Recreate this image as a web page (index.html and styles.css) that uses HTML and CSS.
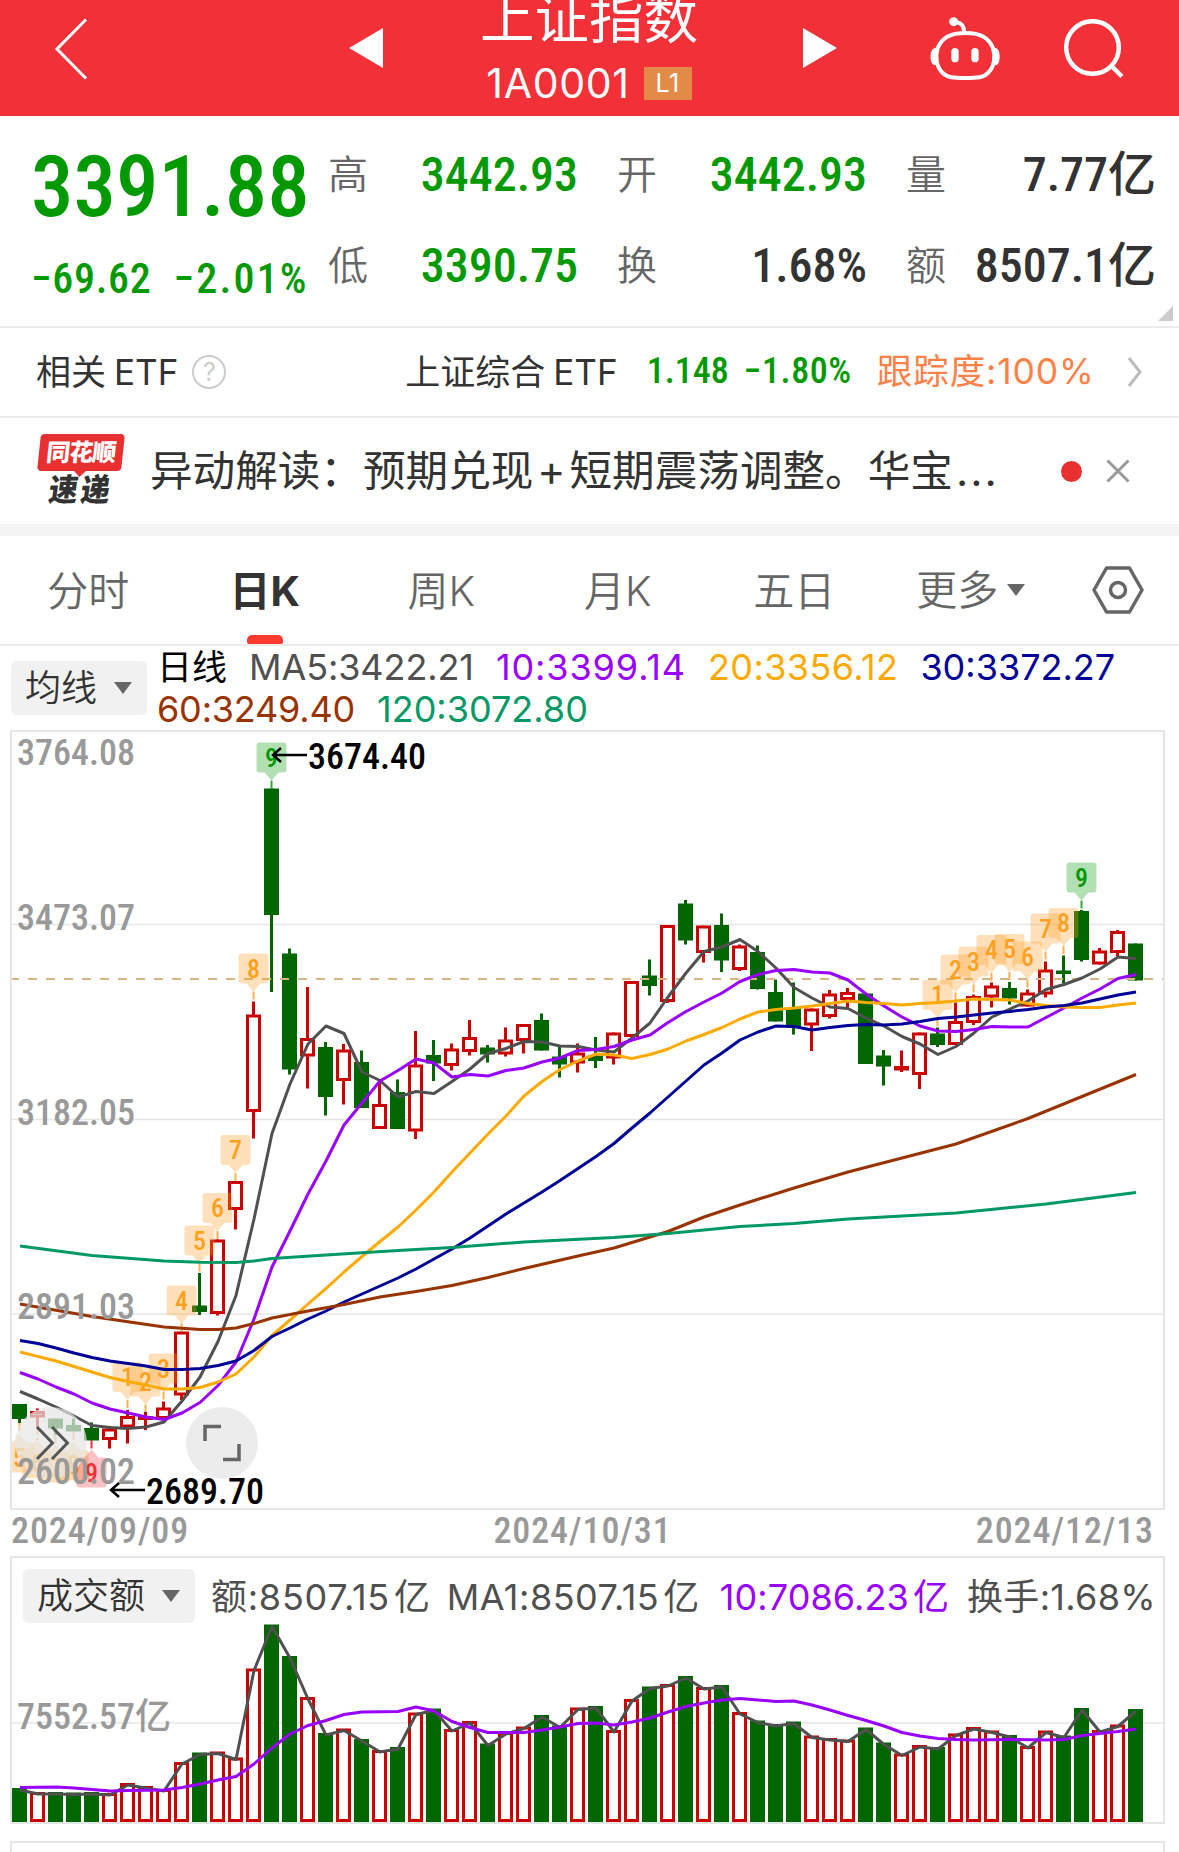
FILE: index.html
```
<!DOCTYPE html>
<html lang="zh-CN">
<head>
  <meta charset="UTF-8">
  <meta name="viewport" content="width=device-width, initial-scale=1.0">
  <title>上证指数 1A0001</title>
  <link rel="stylesheet" href="styles.css">
</head>
<body>
  <header>
    <svg class="back" width="34" height="62" viewBox="0 0 34 62"><path d="M32 1.500L3 31L32 60.500" fill="none" stroke="#fff" stroke-width="3"/></svg>
    <svg class="prev" width="34" height="40" viewBox="0 0 34 40"><path d="M34 0V40L0 20Z" fill="#fff"/></svg>
    <div class="title">
      <div class="name">上证指数</div>
      <div class="code">1A0001 <span class="level">L1</span></div>
    </div>
    <svg class="next" width="34" height="40" viewBox="0 0 34 40"><path d="M0 0V40L34 20Z" fill="#fff"/></svg>
    <svg class="robot" width="70" height="66" viewBox="93 47 210 198">
      <path d="M199 98C152 98 129 113 116 143C108 170 112 199 130 217C143 232 165 233 199 233S255 232 268 217C286 199 290 170 282 143C269 113 246 98 199 98Z" fill="none" stroke="#fff" stroke-width="12"/>
      <path d="M108 143C90 145 90 193 108 195L115 192C109 176 109 160 114 143ZM290 143C306 145 306 193 290 195L283 192C289 176 289 160 284 143Z" fill="#fff"/>
      <path d="M195 97C196 78 189 68 172 65" fill="none" stroke="#fff" stroke-width="12"/>
      <circle cx="164" cy="64" r="13.500" fill="#fff"/>
      <rect x="157" y="143" width="22" height="43" rx="11" fill="#fff"/>
      <rect x="217" y="143" width="22" height="43" rx="11" fill="#fff"/>
    </svg>
    <svg class="search" width="60" height="60" viewBox="0 0 60 60"><circle cx="28.500" cy="28.500" r="26.300" fill="none" stroke="#fff" stroke-width="4.500"/><path d="M48 47.500L58 57.500" stroke="#fff" stroke-width="4.500"/></svg>
  </header>

  <section class="quote">
    <div class="price down">
      <div class="last">3391.88</div>
      <div class="change"><span>−69.62</span><span class="percent">−2.01%</span></div>
    </div>
    <div class="stats">
      <div class="stat"><label>高</label><b class="down">3442.93</b></div>
      <div class="stat"><label>开</label><b class="down">3442.93</b></div>
      <div class="stat"><label>量</label><b>7.77亿</b></div>
      <div class="stat"><label>低</label><b class="down">3390.75</b></div>
      <div class="stat"><label>换</label><b>1.68%</b></div>
      <div class="stat"><label>额</label><b>8507.1亿</b></div>
    </div>
    <i class="corner"></i>
  </section>

  <section class="etf">
    <span>相关<em>ETF</em></span>
    <span class="help">?</span>
    <span class="etf-name">上证综合<em>ETF</em></span>
    <span class="din down">1.148</span>
    <span class="din down rate">−1.80%</span>
    <span class="track">跟踪度:100%</span>
    <svg class="more" width="16" height="32" viewBox="0 0 16 32"><path d="M2 2L13 16L2 30" fill="none" stroke="#bbb" stroke-width="3"/></svg>
  </section>

  <section class="notice">
    <div class="badge">
      <div class="badge-top">同花顺</div>
      <div class="badge-bottom">速递</div>
    </div>
    <p>异动解读：预期兑现<span class="plus">+</span>短期震荡调整。华宝<span class="dots">...</span></p>
    <i class="dot"></i>
    <svg class="close" width="24" height="24" viewBox="0 0 24 24"><path d="M1.500 1.500L22.500 22.500M22.500 1.500L1.500 22.500" stroke="#999" stroke-width="3"/></svg>
  </section>

  <nav>
    <a class="tab">分时</a>
    <a class="tab active">日K</a>
    <a class="tab">周K</a>
    <a class="tab">月K</a>
    <a class="tab">五日</a>
    <a class="tab last-tab">更多<i class="arrow"></i></a>
    <svg class="gear" width="52" height="48" viewBox="0 0 52 48"><path d="M14.500 2H37.500L50 24L37.500 46H14.500L2 24Z" fill="none" stroke="#666" stroke-width="3.500" stroke-linejoin="round"/><circle cx="26" cy="24" r="7.500" fill="none" stroke="#666" stroke-width="3.500"/></svg>
  </nav>

  <section class="legend">
    <div class="select">均线<i class="arrow"></i></div>
    <div class="ma">
      <span class="day">日线</span>
      <span class="ma5">MA5:3422.21</span>
      <span class="ma10">10:3399.14</span>
      <span class="ma20">20:3356.12</span>
      <span class="ma30">30:3372.27</span>
      <span class="ma60">60:3249.40</span>
      <span class="ma120">120:3072.80</span>
    </div>
  </section>

  <div class="panel">
    <svg id="kline" width="1151" height="776" viewBox="12 732 1151 776"></svg>
  </div>
  <div class="dates"><span>2024/09/09</span><span>2024/10/31</span><span>2024/12/13</span></div>

  <div class="panel volume">
    <div class="volume-bar">
      <div class="select">成交额<i class="arrow"></i></div>
      <span class="v1">额:8507.15<u>亿</u></span>
      <span class="v2">MA1:8507.15<u>亿</u></span>
      <span class="v3">10:7086.23<u>亿</u></span>
      <span class="v4">换手:1.68%</span>
    </div>
    <svg id="volume" width="1151" height="200" viewBox="12 1622 1151 200"></svg>
  </div>
  <div class="panel next-panel"></div>
  <script src="script.js"></script>
</body>
</html>
```
FILE: styles.css
```
body {
  margin: 0;
  width: 1179px;
  background: #fff;
  color: #333;
  font-family: Inter, "Noto Sans CJK SC", sans-serif;
  line-height: 1.2;
  display: flex;
  flex-direction: column;
}

header, section, nav, .panel, .dates {
  box-sizing: border-box;
  flex-shrink: 0;
}

i, em, u {
  font-style: normal;
  text-decoration: none;
}

.down {
  color: #009900 !important;
}

header {
  height: 116px;
  background: #f23038;
  color: #fff;
  display: flex;
  align-items: flex-start;
  overflow: hidden;
}

header svg {
  flex-shrink: 0;
}

.back {
  margin: 18px 0 0 54px;
}

.prev {
  margin: 28px 0 0 261px;
}

.title {
  width: 420px;
  padding-right: 8px;
  box-sizing: border-box;
  text-align: center;
}

.name {
  font-size: 54.500px;
  line-height: 60px;
  margin-top: -12px;
  font-weight: 370;
}

.code {
  font-size: 41px;
  line-height: 42px;
  margin-top: 14px;
  display: flex;
  justify-content: center;
  align-items: center;
  gap: 14px;
  font-weight: 370;
  letter-spacing: .7px;
}

.level {
  background: #e28b48;
  width: 48px;
  height: 33px;
  line-height: 33px;
  font-size: 25px;
}

.next {
  margin-top: 28px;
}

.robot {
  margin: 16px 0 0 93px;
}

.search {
  margin: 19px 0 0 64px;
}

.quote {
  height: 212px;
  position: relative;
  display: flex;
  border-bottom: 2px solid #ececec;
}

.price, .stat b, .din, .dates {
  font-family: Roboto, "Noto Sans CJK SC", sans-serif;
  font-stretch: 75%;
  font-weight: 500;
}

.price {
  width: 297px;
  padding: 19px 0 0 31px;
  box-sizing: border-box;
}

.last {
  font-size: 85px;
  line-height: 104px;
}

.change {
  font-size: 42px;
  line-height: 50px;
  margin-top: 15px;
  display: flex;
  gap: 22px;
  white-space: nowrap;
  font-weight: 480;
  letter-spacing: .7px;
}

.percent {
  letter-spacing: 2.200px;
}

.stats {
  flex-grow: 1;
  display: grid;
  grid-template-columns: 250px 250px 250px;
  column-gap: 39px;
  grid-auto-rows: 91px;
  padding: 13px 0 0 31px;
}

.stat {
  display: flex;
  justify-content: space-between;
  align-items: center;
}

.stat label {
  font-size: 40px;
  color: #666;
  font-weight: 350;
}

.stat b {
  font-size: 48px;
}

.corner {
  position: absolute;
  right: 6px;
  bottom: 5px;
  border-left: 15px solid transparent;
  border-bottom: 15px solid #ccc;
}

.etf {
  height: 90px;
  display: flex;
  align-items: center;
  border-bottom: 2px solid #ececec;
  padding-left: 36px;
  font-size: 35px;
  font-weight: 380;
  white-space: nowrap;
}

.etf em {
  margin-left: 8px;
}

.help {
  width: 30px;
  height: 30px;
  border: 2px solid #ccc;
  border-radius: 50%;
  margin-left: 14px;
  font-size: 25px;
  line-height: 30px;
  text-align: center;
  color: #ccc;
}

.etf-name {
  margin-left: 179px;
}

.etf .din {
  font-size: 36px;
  margin-left: 29px;
}

.etf .rate {
  margin-left: 15px;
  letter-spacing: .6px;
}

.track {
  color: #ff8147;
  margin-left: 25px;
  font-size: 35.500px;
  letter-spacing: .9px;
}

.more {
  margin-left: 32px;
}

.notice {
  height: 118px;
  border-bottom: 12px solid #f4f4f4;
  display: flex;
  align-items: center;
  padding-left: 39px;
}

.badge {
  width: 84px;
  text-align: center;
  font-weight: 900;
  margin-right: 27px;
}

.badge-top {
  background: #e93030;
  color: #fff;
  border-radius: 4px;
  transform: skewX(-6deg);
  height: 37px;
  line-height: 37px;
  font-size: 24px;
  letter-spacing: -1px;
}

.badge-top::after {
  content: "";
  position: absolute;
  left: 37px;
  top: 37px;
  border: 6px solid transparent;
  border-top-color: #e93030;
  border-bottom: 0;
}

.badge-bottom {
  transform: skewX(-8deg) scaleY(1.08);
  color: #333;
  font-size: 29px;
  line-height: 38px;
  letter-spacing: 3px;
}

.notice p {
  width: 860px;
  margin: 0;
  font-size: 42.600px;
  font-weight: 370;
  white-space: nowrap;
}

.plus {
  margin: 0 4px;
}

.dots {
  letter-spacing: 2px;
  margin-left: 3px;
}

.dot {
  width: 21px;
  height: 21px;
  border-radius: 50%;
  background: #e93030;
  margin-left: 51px;
}

.close {
  margin-left: 24px;
}

nav {
  height: 110px;
  display: flex;
  align-items: center;
  border-bottom: 2px solid #ececec;
  font-size: 41px;
  font-weight: 350;
  color: #666;
}

.tab {
  width: 176.500px;
  height: 108px;
  line-height: 111px;
  text-align: center;
  position: relative;
}

.tab.active {
  color: #333;
  font-weight: 700;
}

.tab.active::after {
  content: "";
  position: absolute;
  left: 70px;
  bottom: 0;
  width: 36px;
  height: 9px;
  border-radius: 5px 5px 2px 2px;
  background: #ff3b30;
}

.arrow {
  display: inline-block;
  border: 9px solid transparent;
  border-top: 12px solid #666;
  border-bottom: 0;
}

.last-tab {
  display: flex;
  justify-content: center;
  align-items: center;
  gap: 9px;
}

.gear {
  margin-left: 33px;
}

.legend {
  height: 84px;
  display: flex;
  padding-left: 11px;
}

.select {
  height: 54px;
  border-radius: 6px;
  background: #f1f1f1;
  font-size: 36px;
  line-height: 55px;
  font-weight: 350;
  box-sizing: border-box;
  padding: 0 15px 0 14px;
  display: flex;
  align-items: center;
  justify-content: space-between;
}

.legend .select {
  width: 136px;
  margin-top: 15px;
}

.ma {
  width: 1010px;
  margin-left: 10px;
  display: flex;
  flex-wrap: wrap;
  column-gap: 22px;
  font-size: 36px;
  line-height: 42px;
  height: 84px;
  font-weight: 380;
}

.day { color: #000; font-size: 35px; }
.ma5 { color: #505050; letter-spacing: -.1px; }
.ma10 { color: #9900ff; letter-spacing: .900px; }
.ma20 { color: #ffaa00; letter-spacing: .4px; }
.ma30 { color: #000099; }
.ma60 { color: #993300; letter-spacing: -.2px; }
.ma120 { color: #009966; }

.panel {
  width: 1155px;
  margin-left: 10px;
  border: 2px solid #e6e6e6;
  height: 780px;
}

.panel svg {
  display: block;
}

.dates {
  height: 46px;
  padding: 0 25px 0 11px;
  display: flex;
  justify-content: space-between;
  color: #999;
  font-size: 36px;
  line-height: 42px;
  letter-spacing: .9px;
}

.volume {
  height: 268px;
}

.volume-bar {
  height: 64px;
  padding: 11px 0 0 11px;
  box-sizing: border-box;
  display: flex;
  align-items: flex-start;
  font-size: 36px;
  line-height: 56px;
  font-weight: 380;
  color: #505050;
  white-space: nowrap;
}

.volume .select {
  width: 172px;
  color: #333;
  flex-shrink: 0;
  margin-right: 16px;
}

.volume-bar u {
  margin-left: 4px;
}

.v1 { letter-spacing: .750px; }
.v2 { letter-spacing: .5px; margin-left: 16px; }
.v3 { letter-spacing: .1px; margin-left: 20px; color: #9900ff; }
.v4 { letter-spacing: .3px; margin-left: 18px; }

.next-panel {
  margin-top: 17px;
  height: 11px;
  border-bottom: 0;
}

/* chart */
svg text {
  font-family: Roboto, "Noto Sans CJK SC", sans-serif;
  font-stretch: 75%;
  font-weight: 500;
}

.grid { stroke: #e6e6e6; stroke-width: 1.500; }
.axis { fill: #999; font-size: 36px; }
.extreme { fill: #000; font-size: 36px; }
.line { fill: none; stroke-width: 3; stroke-linejoin: round; }
.green { fill: #006600; stroke: #006600; stroke-width: 3; }
.red { fill: #fff; stroke: #cc0000; stroke-width: 3; }
.flag { fill: #ffa028; fill-opacity: .32; }
.flag-text { fill: #ffa020; font-size: 26px; text-anchor: middle; }
.stem { stroke: #ffb050; stroke-width: 2; stroke-dasharray: 8 3; }
.sell .flag { fill: #009900; fill-opacity: .3; }
.sell .flag-text { fill: #009900; }
.sell .stem { stroke: #33aa33; }
.buy .flag { fill: #f03038; fill-opacity: .3; }
.buy .flag-text { fill: #f03038; }
.buy .stem { stroke: #f03038; }
```
FILE: script.js
```
const STEP = 18;
const LEFT = 19.5;
const xAt = (i) => LEFT + i * STEP;

// [direction, body top, body bottom, high, low]
const candles = [
  ['g', 1404, 1419, 1404, 1423], ['r', 1411, 1417.5, 1408.5, 1427], ['g', 1418.5, 1428.5, 1418.5, 1435],
  ['g', 1425, 1431.5, 1418.5, 1431.5], ['g', 1428, 1440.5, 1422.5, 1440.5], ['r', 1428.5, 1440, 1426, 1448.5],
  ['r', 1416, 1427.5, 1410, 1443.5], ['r', 1416, 1420, 1412, 1430], ['r', 1407.5, 1419, 1401.5, 1419],
  ['r', 1331.5, 1395.5, 1331.5, 1400], ['g', 1305.5, 1312, 1273, 1315], ['r', 1239.5, 1314, 1239.5, 1315.5],
  ['r', 1181, 1210, 1181, 1229.5], ['r', 1014.5, 1112, 1001.5, 1138.5], ['g', 788.5, 915, 788.5, 992],
  ['g', 953.5, 1069.5, 948.5, 1074.5], ['r', 1038, 1056.5, 987, 1088.5], ['g', 1047, 1097, 1042, 1115.5],
  ['r', 1049.5, 1081, 1044, 1104.5], ['g', 1062, 1108, 1050.5, 1108], ['r', 1104, 1129, 1080, 1129],
  ['g', 1092, 1129, 1079.5, 1129], ['r', 1064.5, 1131.5, 1031, 1139], ['g', 1055, 1063.5, 1040, 1081],
  ['r', 1048.5, 1066, 1043.5, 1070.5], ['r', 1037, 1052, 1020, 1055.5], ['g', 1047.5, 1054.5, 1045, 1062.5],
  ['r', 1039.5, 1054.5, 1027.5, 1056.5], ['r', 1024, 1041, 1024, 1053.5], ['g', 1020, 1050.5, 1013.5, 1050.5],
  ['g', 1056.5, 1064.5, 1046.5, 1077.5], ['r', 1052.5, 1063.5, 1043.5, 1072.5], ['g', 1055.5, 1061, 1037, 1068],
  ['r', 1032.5, 1058.5, 1032.5, 1064.5], ['r', 981, 1037, 981, 1037], ['g', 975.5, 986, 959.5, 995.5],
  ['r', 925, 1002, 925, 1003], ['g', 903.5, 940.5, 900, 944.5], ['r', 925.5, 953, 925.5, 962.5],
  ['g', 925, 960.5, 913.5, 972], ['r', 945.5, 970, 944.5, 971], ['g', 952, 989, 945.5, 989.5],
  ['g', 992, 1021.5, 979.5, 1021.5], ['g', 1008, 1027.5, 982.5, 1034.5], ['r', 1008.5, 1025.5, 1008.5, 1051],
  ['r', 993.5, 1017, 990, 1018.5], ['r', 992, 1000, 988, 1007.5], ['g', 993.5, 1064, 993.5, 1064],
  ['g', 1055.5, 1066.5, 1050, 1085.5], ['r', 1066, 1070.5, 1050.5, 1072], ['r', 1032.5, 1075, 1032.5, 1089],
  ['g', 1033.5, 1045, 1027.5, 1047], ['r', 1021, 1045, 1002.5, 1045], ['r', 996, 1023, 994.5, 1025],
  ['r', 985.5, 997.5, 982.5, 1007.5], ['g', 988, 998.5, 982, 1004.5], ['r', 992.5, 1006.5, 989.5, 1006.5],
  ['r', 969.5, 994.5, 961.5, 997.5], ['g', 970.5, 973.5, 955.5, 983.5], ['g', 911, 960, 910, 961.5],
  ['r', 950.5, 964.5, 948, 964.5], ['r', 931, 953, 930, 956], ['g', 943.5, 980.5, 943.5, 980.5]
];

// [index, y] pairs
const ma120 = [[0,1246],[4,1255.5],[8,1261],[10,1262.3],[12,1262.5],[13,1261],[14,1258.5],[17,1255],[21,1250.5],[24,1247.5],[28,1242],[33,1237.5],[36,1233.5],[40,1226.5],[43,1223.5],[46,1219],[52,1213],[57,1204],[62,1192.5]];
const ma60 = [[0,1304],[4,1316.5],[8,1327],[10,1329.5],[11,1329.5],[12,1328],[13,1323.5],[14,1318],[16,1311],[18,1304.5],[20,1297],[22,1291.5],[24,1285.5],[26,1277.5],[28,1268.5],[31,1256],[33,1248],[36,1231.5],[38,1217],[40,1205],[43,1188],[46,1172],[49,1158],[52,1144],[56,1118.5],[59,1096.5],[62,1074.5]];
const ma30 = [1340.5,1343.5,1348,1353,1357.5,1361,1363.5,1366,1369.5,1369.5,1368.5,1365.5,1361,1350.5,1336.5,1328,1319,1311,1302,1294,1286,1278,1269,1259,1249,1238,1226,1214,1203,1192,1180.5,1168.5,1156.5,1143.5,1128,1113,1097,1081,1065,1053,1040,1032,1026,1026.5,1030,1027.5,1025.5,1024.5,1025,1024,1021.5,1018.5,1017,1015,1013,1011.5,1009.5,1007,1005.5,1003,999,995,992];
const ma20 = [1352,1356.5,1361,1366.5,1372,1377.5,1381.5,1385,1389,1389,1387.5,1382,1374,1357,1335.5,1320,1304,1288.5,1272,1256.5,1241.5,1227,1210,1192,1172,1153,1134,1116,1096,1081.5,1069.5,1061,1054,1055,1058.5,1054.5,1049,1041,1034.5,1027.5,1019,1012,1009.5,1008,1006,1003.5,1001,1002.5,1003.5,1005,1003.5,1002.5,1001,999,999.5,1000,1003.5,1005.5,1007,1007.5,1007.5,1005,1003];
const ma10 = [1372.5,1379,1387,1394,1403,1409,1413,1417,1419.5,1413,1402.5,1385.5,1362,1319,1267,1231,1194,1161,1125,1103,1081,1070.5,1059,1063,1077,1074.5,1076,1070.5,1068,1062,1058,1050.5,1049.5,1046.5,1040,1035,1022.5,1011.5,1002,993,981.5,974.5,970.5,969.5,972,973,980,994,1006,1017,1026,1031,1031.5,1029.5,1026.5,1027,1027,1017.5,1008,998,989,978.5,974.5];
const ma5 = [1391.5,1399,1407,1416,1425.5,1427.5,1428.5,1427,1422,1401,1377,1341.5,1295.5,1219,1133.5,1084,1044,1026,1033.5,1072,1080.5,1097,1091.5,1093.5,1081.5,1069,1053.5,1048.5,1041.5,1042,1046,1046.5,1050,1052,1038,1023,997,973,951.5,947,939.5,951.5,968,987.5,998,1007,1008.5,1018,1026,1036.5,1044,1054.5,1046.5,1033,1017,1009,1001,989.5,984.5,978,969,957,958.5];

const volumes = [1788,1792,1792,1792.5,1792,1793,1783,1786,1789,1762,1752.5,1751.5,1757.5,1668.5,1624.5,1656,1697,1733,1728.5,1739,1750,1747,1712.5,1708.5,1729,1721,1743.5,1732,1726.5,1715,1725.5,1707.5,1706,1730,1699,1686.5,1684,1676,1687,1685,1712,1720.5,1724,1721.5,1735.5,1738,1739.5,1727.5,1742.5,1753.5,1745,1747,1733.5,1727,1730.5,1735,1746,1730.5,1735.5,1708,1730,1724.5,1709];
const vma10 = [[0,1787.5],[2,1787],[3,1788],[5,1791],[6,1790.5],[8,1790],[9,1787.5],[10,1784],[11,1780],[12,1776.5],[13,1764],[14,1748],[15,1734],[16,1725.5],[17,1720.5],[18,1714.5],[19,1712],[21,1711.5],[22,1707],[23,1711],[24,1721.5],[25,1727.5],[26,1732.5],[28,1732.5],[29,1730],[30,1727],[31,1723.5],[32,1723],[33,1725],[34,1722],[35,1718],[36,1712],[37,1706.5],[38,1703],[39,1700],[40,1698.5],[41,1700],[42,1701.5],[43,1701],[44,1705],[45,1710],[46,1715.5],[47,1720.5],[48,1726],[49,1732.5],[50,1736],[51,1738.5],[52,1739.5],[53,1740],[55,1739.5],[57,1740],[58,1739.5],[59,1735.5],[61,1731.5],[62,1729]];

// nine-turn marks: [index, digit, box top, class]
const marks = [
  [6, 1, 1362, ''], [7, 2, 1366.5, ''], [8, 3, 1353.5, ''], [9, 4, 1285.5, ''], [10, 5, 1225.5, ''],
  [11, 6, 1193, ''], [12, 7, 1135, ''], [13, 8, 953.5, ''], [14, 9, 742.5, 'sell'],
  [51, 1, 980, ''], [52, 2, 954.5, ''], [53, 3, 946.5, ''], [54, 4, 935, ''], [55, 5, 934, ''],
  [56, 6, 941.5, ''], [57, 7, 913.5, ''], [58, 8, 908, ''], [59, 9, 862.5, 'sell']
];
const lowMarks = [[0, 5, 1442.5, ''], [1, 6, 1448, ''], [2, 7, 1452.5, ''], [3, 8, 1450, ''], [4, 9, 1457.5, 'buy']];

function hline(y) {
  return `<line class="grid" x1="12" x2="1163" y1="${y}" y2="${y}"/>`;
}

function line(data, color) {
  const pts = data.map((d, i) => Array.isArray(d) ? `${xAt(d[0]) + .5},${d[1]}` : `${xAt(i) + .5},${d}`);
  return `<polyline class="line" stroke="${color}" points="${pts.join(' ')}"/>`;
}

function box(i, dir, top, bottom) {
  const h = Math.max(bottom - top - 3, 0.5);
  return `<rect class="${dir === 'g' ? 'green' : 'red'}" x="${xAt(i) - 6}" y="${top + 1.5}" width="12" height="${h}"/>`;
}

function candle([dir, top, bottom, high, low], i) {
  const c = dir === 'g' ? 'green' : 'red';
  const x = xAt(i);
  return `<path class="${c}" d="M${x} ${high}V${top + 1}M${x} ${bottom - 1}V${Math.max(low, bottom - 1)}"/>` + box(i, dir, top, bottom);
}

function mark([i, n, y, cls], below) {
  const x = xAt(i);
  const tip = below ? `M${x - 7} ${y}L${x} ${y - 8}L${x + 7} ${y}Z` : `M${x - 7} ${y + 30}L${x} ${y + 38}L${x + 7} ${y + 30}Z`;
  const stem = below ? [candles[i][4], y - 8] : [y + 38, candles[i][3]];
  return `<g class="${cls}"><line class="stem" x1="${x}" x2="${x}" y1="${stem[0]}" y2="${stem[1]}"/>
    <rect class="flag" x="${x - 15}" y="${y}" width="30" height="30" rx="3"/><path class="flag" d="${tip}"/>
    <text class="flag-text" x="${x}" y="${y + 24}">${n}</text></g>`;
}

function label(x, y, text, width, cls) {
  return `<text class="${cls}" x="${x}" y="${y}" textLength="${width}">${text}</text>`;
}

function arrow(x, y) {
  return `<path d="M${x + 34} ${y}H${x}M${x + 8} ${y - 7}L${x} ${y}L${x + 8} ${y + 7}" fill="none" stroke="#000" stroke-width="2.5"/>`;
}

document.getElementById('kline').innerHTML =
  [924.5, 1119.5, 1314].map(hline).join('') +
  candles.map(candle).join('') +
  '<line x1="10" x2="1163" y1="979" y2="979" stroke="#d9b582" stroke-width="2" stroke-dasharray="9 9"/>' +
  marks.map((m) => mark(m, false)).join('') + lowMarks.map((m) => mark(m, true)).join('') +
  line(ma5, '#505050') + line(ma10, '#9900ff') + line(ma20, '#ffaa00') + line(ma30, '#000099') + line(ma60, '#993300') + line(ma120, '#009966') +
  '<circle cx="51" cy="1443" r="36" fill="#e6e6e6" fill-opacity=".72"/><path d="M37 1427L52.500 1443L37 1459M52 1427L67.500 1443L52 1459" fill="none" stroke="#555" stroke-width="3"/>' +
  '<circle cx="222" cy="1443" r="36" fill="#ececec"/><path d="M205 1441V1426.500H221M239 1444V1459.500H223" fill="none" stroke="#666" stroke-width="3.500"/>' +
  label(17, 765, '3764.08', 118, 'axis') + label(17, 929.5, '3473.07', 118, 'axis') + label(17, 1124.5, '3182.05', 118, 'axis') +
  label(17, 1319, '2891.03', 118, 'axis') + label(17, 1483.5, '2600.02', 118, 'axis') +
  arrow(273, 755) + label(308, 768.5, '3674.40', 118, 'extreme') +
  arrow(111, 1490) + label(146, 1503.5, '2689.70', 118, 'extreme');

document.getElementById('volume').innerHTML =
  hline(1723) +
  volumes.map((v, i) => box(i, candles[i][0], v, 1822)).join('') +
  line(volumes.map((v) => v + 2), '#505050') + line(vma10, '#9900ff') +
  label(17, 1728.5, '7552.57亿', 154, 'axis');
```
